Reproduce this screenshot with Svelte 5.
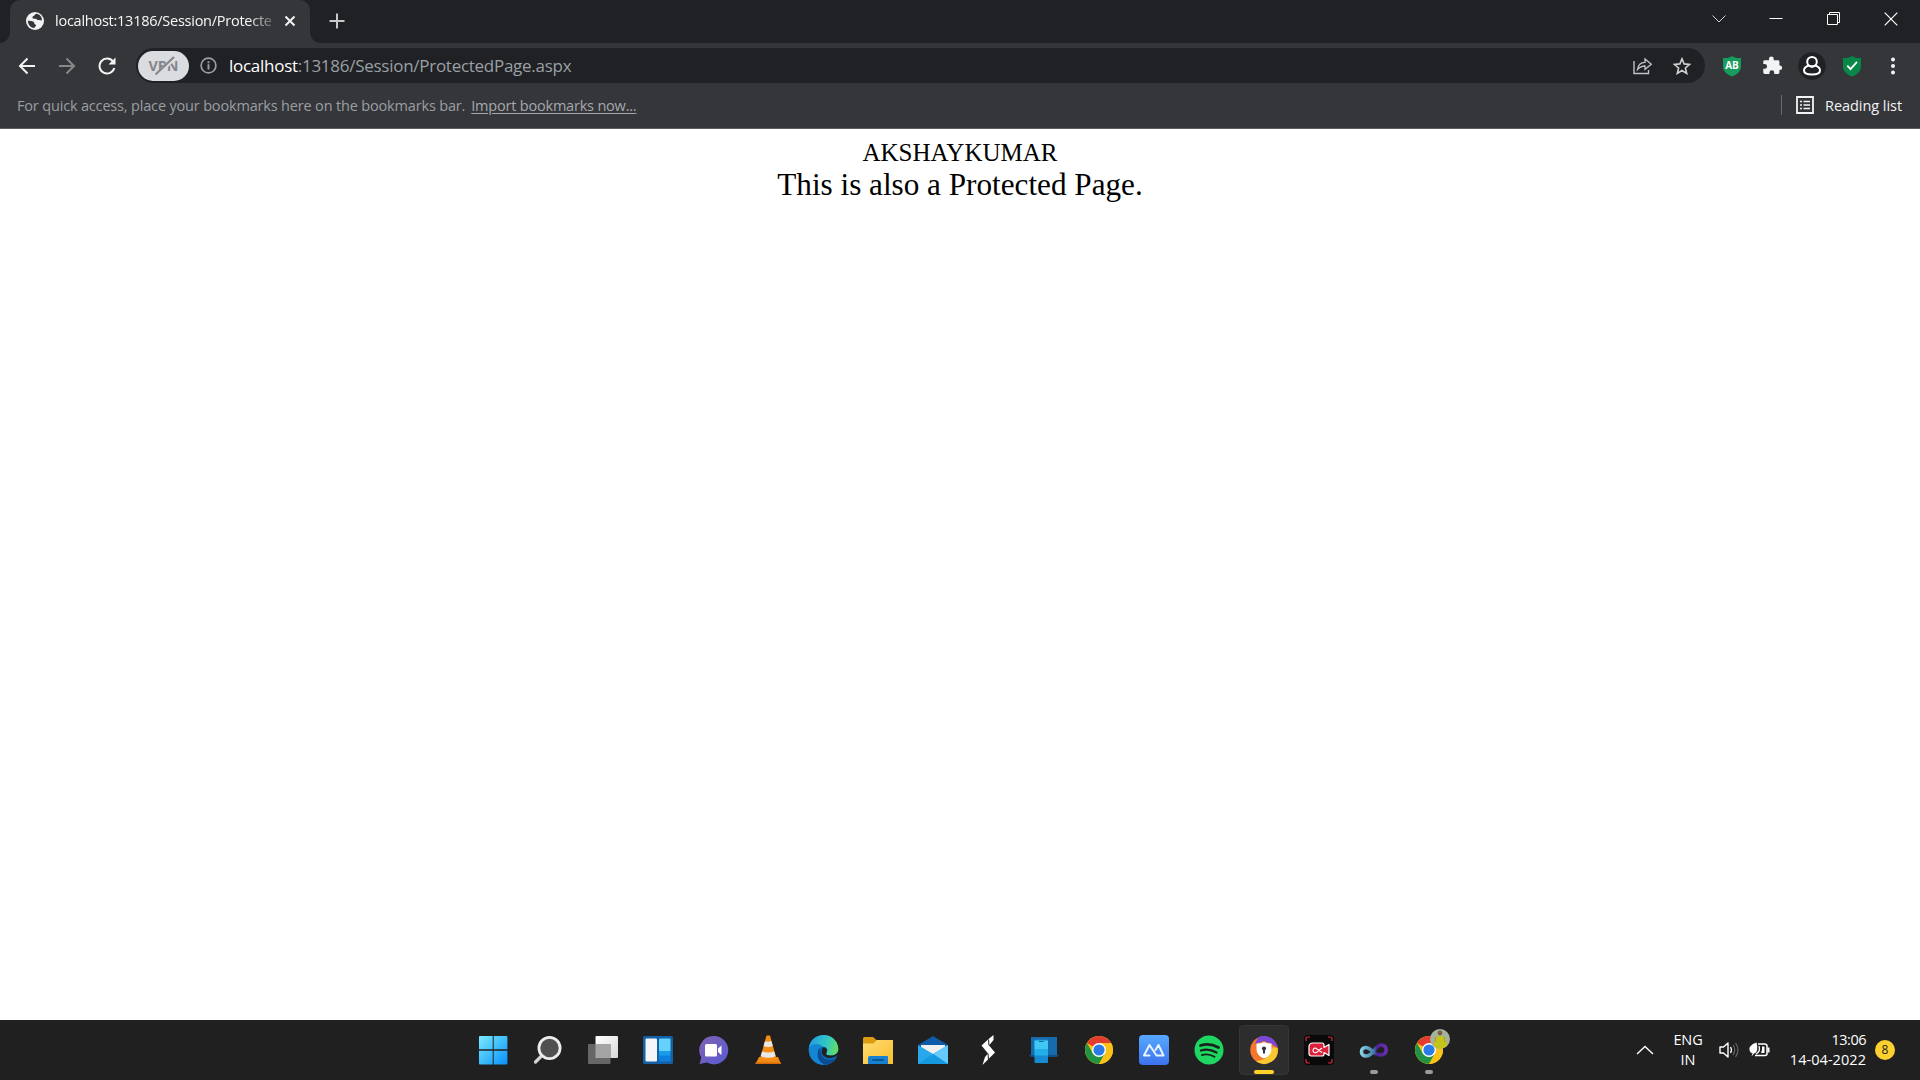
<script>
  const apps = ['start', 'search', 'tasks', 'widgets', 'chat', 'vlc', 'edge', 'files', 'mail', 'slash', 'phone', 'chrome', 'market', 'spotify', 'secure', 'recorder', 'studio', 'chromeUser'];
  const running = { secure: 'active', studio: 'idle', chromeUser: 'idle' };
</script>

{#snippet chromeLogo()}
  <circle cx="15" cy="15" r="14" fill="#fbc116" />
  <path d="M15 15 2.900 8A14 14 0 0 1 27.100 8H15Z" fill="#e33b2e" />
  <path d="M2.900 8A14 14 0 0 0 15 29L21 18.500 15 15 9 18.500Z" fill="#229342" />
  <path d="M15 8H27.100A14 14 0 0 1 15 29L21 18.500Z" fill="#fbc116" />
  <circle cx="15" cy="15" r="7" fill="#fff" />
  <circle cx="15" cy="15" r="5.600" fill="#2a7be8" />
{/snippet}

<div class="screen">
  <header class="titlebar">
    <div class="tab">
      <svg class="favicon" width="18" height="18" viewBox="0 0 18 18"><circle cx="9" cy="9" r="9" fill="#f1f3f4" /><path d="M10.400 1.800C8.500 2.200 9 3.500 7.600 4.100 6.200 4.600 6 5.600 7 6.400c1.200.8 2.900-.3 3.900 1 .8 1 2.600.4 5 1.100C16 4.700 13.600 2.300 10.400 1.800Z" fill="#35363a" /><path d="M1.900 8.700c1.900.2 4.100-.1 5.600 1.100 1.200 1 .4 2.200 1.700 2.600 1.200.3 1 1.500.1 2.100-.6.4-.6.900-.9 1.500C4.700 15.900 1.800 12.500 1.900 8.700Z" fill="#35363a" /></svg>
      <span class="title">localhost:13186/Session/Protecte</span>
      <svg class="close" width="12" height="12" viewBox="0 0 12 12"><path d="m1.500 1.500 9 9m0-9-9 9" stroke="#f1f3f4" stroke-width="2" /></svg>
    </div>
    <svg class="newtab" width="16" height="16" viewBox="0 0 16 16"><path d="M8 .5v15M.5 8h15" stroke="#c7c8ca" stroke-width="2" /></svg>
    <div class="window-controls">
      <svg width="14" height="14" viewBox="0 0 14 14"><path d="m.5 3.500 6.500 6.500 6.500-6.500" fill="none" stroke="#d0d1d2" /></svg>
      <svg width="14" height="14" viewBox="0 0 14 14"><path d="M.5 6.500h13" stroke="#fff" /></svg>
      <svg width="14" height="14" viewBox="0 0 14 14"><path d="M.5 2.500h10v10H.5ZM2.500 2.500v-2h10v10h-2" fill="none" stroke="#fff" /></svg>
      <svg width="14" height="14" viewBox="0 0 14 14"><path d="m.7.7 12.600 12.600M13.300.7.7 13.300" stroke="#fff" stroke-width="1.200" /></svg>
    </div>
  </header>

  <nav class="toolbar">
    <svg width="18" height="18" viewBox="0 0 18 18"><path d="M17 9H2m7.500-7.500L2 9l7.500 7.500" fill="none" stroke="#f1f3f4" stroke-width="2" /></svg>
    <svg width="18" height="18" viewBox="0 0 18 18"><path d="M1 9h15M8.500 1.500 16 9l-7.500 7.500" fill="none" stroke="#87888a" stroke-width="2" /></svg>
    <svg width="18" height="18" viewBox="0 0 18 18"><path d="M15 4.500A7.500 7.500 0 1 0 16.300 11" fill="none" stroke="#f1f3f4" stroke-width="2" /><path d="M17.500.5v7h-7Z" fill="#f1f3f4" /></svg>
    <div class="omnibox">
      <span class="vpn"><svg width="35" height="24" viewBox="-2 -2 35 24" overflow="visible"><text x=".5" y="15.300" textLength="30" lengthAdjust="spacingAndGlyphs" font-family="Open Sans, sans-serif" font-size="15" font-weight="700" fill="#85868b">VPN</text><path d="M9 19 25 3" stroke="#dadce0" stroke-width="4.500" /><path d="M7.500 18.500 26 1" stroke="#85868b" stroke-width="2.200" /></svg></span>
      <svg class="info" width="17" height="17" viewBox="0 0 17 17"><circle cx="8.500" cy="8.500" r="7.400" fill="none" stroke="#9b9da0" stroke-width="1.700" /><path d="M8.500 7.300v5.200M8.500 4.200v2" stroke="#9b9da0" stroke-width="1.900" /></svg>
      <span class="url"><b>localhost</b><i>:13186/Session/ProtectedPage.aspx</i></span>
      <svg class="share" width="20" height="18" viewBox="0 0 20 18"><path d="M1 4v12.500h14.500V13" fill="none" stroke="#bfc1c4" stroke-width="1.400" /><path d="M4.500 12.500c.6-4.600 3.300-7 7.500-7.200V2l6.300 5.200-6.300 5.100V9c-3.200 0-5.300 1.100-7.500 3.500Z" fill="none" stroke="#bfc1c4" stroke-width="1.300" /></svg>
      <svg width="18" height="18" viewBox="0 0 18 18"><path d="m9 1.800 2.100 5.100 5.500.5-4.200 3.600 1.300 5.400L9 13.500l-4.700 2.900L5.600 11 1.400 7.400l5.500-.5Z" fill="none" stroke="#d0d1d3" stroke-width="1.600" /></svg>
    </div>
    <div class="extensions">
      <svg width="28" height="28" viewBox="0 0 28 28"><path d="M14 4c2.600 1.900 5.500 2.200 9 2v8.500c0 4.700-3.800 7.900-9 10-5.200-2.100-9-5.300-9-10V6c3.500.2 6.400-.1 9-2Z" fill="#169c5b" /><text x="14" y="17" text-anchor="middle" font-family="Open Sans, sans-serif" font-size="10" font-weight="700" fill="#fff">AB</text></svg>
      <svg width="28" height="28" viewBox="0 0 28 28"><path d="M6 9h4.500V7.500a2.500 2.500 0 0 1 5 0V9H20q1.500 0 1.500 1.500v4h.5a2.400 2.400 0 0 1 0 4.800h-.5V22q0 1.500-1.500 1.500h-4V22a2.400 2.400 0 0 0-5 0v1.500H6Q4.500 23.500 4.500 22v-4H6a2.400 2.400 0 0 0 0-5H4.500v-2.500Q4.500 9 6 9Z" fill="#f1f3f4" transform="translate(1 -.3) scale(.95)" /></svg>
      <svg width="28" height="28" viewBox="0 0 28 28"><circle cx="14" cy="14" r="13.800" fill="#202124" /><circle cx="14" cy="9.700" r="4.800" fill="none" stroke="#fff" stroke-width="2" /><path d="M10.500 13.500C7.700 14.600 6 16.300 6 18.500c0 2.800 3.400 4 8 4s8-1.200 8-4c0-2.200-1.700-3.900-4.500-5-2 1.300-5 1.300-7 0Z" fill="none" stroke="#fff" stroke-width="2" /></svg>
      <svg width="28" height="28" viewBox="0 0 28 28"><path d="M14 4c2.600 1.900 5.500 2.200 9 2v8.500c0 4.700-3.800 7.900-9 10-5.200-2.100-9-5.300-9-10V6c3.500.2 6.400-.1 9-2Z" fill="#078849" /><path d="m9.300 13.700 3.200 3.400L19 9.800" fill="none" stroke="#fff" stroke-width="1.800" /></svg>
      <svg width="28" height="28" viewBox="0 0 28 28" fill="#f1f3f4"><circle cx="14" cy="7.500" r="2" /><circle cx="14" cy="14" r="2" /><circle cx="14" cy="20.500" r="2" /></svg>
    </div>
  </nav>

  <div class="bookmarks">
    <span class="hint">For quick access, place your bookmarks here on the bookmarks bar.</span>
    <span class="import">Import bookmarks now...</span>
    <div class="reading">
      <svg width="18" height="18" viewBox="0 0 18 18"><path d="M1 1h16v16H1Z" fill="none" stroke="#f1f3f4" stroke-width="1.800" /><path d="M4 5.500h2m1.500 0H14M4 9h2m1.500 0H14m-10 3.500h2m1.500 0H14" stroke="#f1f3f4" stroke-width="1.700" /></svg>
      <span>Reading list</span>
    </div>
  </div>

  <main>
    <div class="name">AKSHAYKUMAR</div>
    <div class="message">This is also a Protected Page.</div>
  </main>

  <footer class="taskbar">
    <div class="apps">
      {#each apps as app}
        <div class={['app', running[app]]}>
          <svg width="30" height="30" viewBox="0 0 30 30" overflow="visible">
            {#if app === 'start'}
              <defs><linearGradient id="win" x1="1" y1="1" x2="29" y2="29" gradientUnits="userSpaceOnUse"><stop stop-color="#7beaff" /><stop offset="1" stop-color="#0a94fb" /></linearGradient></defs>
              <path d="M2 1h13v13.500H1V2q0-1 1-1Zm14 0h13q1 0 1 1v12.500H16ZM1 16h14v14H2q-1 0-1-1Zm15 0h14v13q0 1-1 1H16Z" fill="url(#win)" transform="translate(0 0) scale(.98)" />
            {:else if app === 'search'}
              <path d="m9 20.500-6.500 6.500" stroke="#d4d4d4" stroke-width="3.200" stroke-linecap="round" /><circle cx="16.500" cy="13" r="10.600" fill="#505050" stroke="#ececec" stroke-width="2.800" />
            {:else if app === 'tasks'}
              <defs><linearGradient id="tv" x2="1" y2="1"><stop stop-color="#fff" /><stop offset="1" stop-color="#d8d8d8" /></linearGradient></defs>
              <rect x="7.500" y="1" width="22.500" height="22" rx="1" fill="url(#tv)" /><rect y="9" width="22.500" height="20" rx="1" fill="#666" /><path d="M7.500 9h15v14h-15Z" fill="#a4a4a4" />
            {:else if app === 'widgets'}
              <rect y="1" width="30" height="28" rx="1.500" fill="#1360a6" /><rect x="2.500" y="3.500" width="11.500" height="23" rx="1" fill="#f3f5f7" /><rect x="16" y="3.500" width="11.500" height="13" rx="1" fill="#65d2fb" /><path d="M16 16h11.500v5H16Z" fill="#199be8" /><path d="M16 20.500h11.500v6H16Z" fill="#0c80dc" />
            {:else if app === 'chat'}
              <defs><linearGradient id="chat" x2="1" y2="1"><stop stop-color="#8062b4" /><stop offset="1" stop-color="#595bd2" /></linearGradient></defs>
              <path d="M15.500 1A14.200 14.200 0 1 1 9 27.500L1.500 29 3.300 22.500A14.200 14.200 0 0 1 15.500 1Z" fill="url(#chat)" /><rect x="7" y="9" width="12" height="12.500" rx="1.500" fill="#fff" /><path d="M20 13.500 23.500 10.500v9.500L20 17Z" fill="#fff" />
            {:else if app === 'vlc'}
              <path d="M6 22h19l3 7H2.500Z" fill="#f18a12" /><path d="M13.500.5h3.500L23.500 24q-8 3.500-16.500 0Z" fill="#f48e17" /><path d="m12 6-1.500 5q4.500 2 9.300 0L18.300 6q-3 1.400-6.300 0Zm-3 10.500-1.400 4.700q7.500 3 15 0l-1.400-4.700q-6 2-12.200 0Z" fill="#e8e8e8" /><path d="M2.500 27.500h25.500V29H2.500Z" fill="#d96b08" />
            {:else if app === 'edge'}
              <defs><linearGradient id="edgeTop" x1="2" y1="8" x2="30" y2="16" gradientUnits="userSpaceOnUse"><stop stop-color="#249fdc" /><stop offset=".55" stop-color="#32c8c4" /><stop offset="1" stop-color="#69df58" /></linearGradient></defs>
              <circle cx="15.500" cy="15" r="14.800" fill="#0c67b7" /><path d="M.8 13C2 5 8 0 15.500 0 24 0 30 6 30.300 13.500c.1 4.600-3.300 7-7.300 7-4.200 0-5.500-1.500-4.400-3 2-3-.1-6-4.200-6C8.500 8.500 3.500 9.500.8 13Z" fill="url(#edgeTop)" /><path d="M.8 13c3-4.500 9.500-5.500 14.200-1.300-5 .8-6.300 6.300-3.300 10.200 3.100 4 9.700 4.700 16.300 1.300C25.500 27.500 20.500 30 15.500 29.800 6.500 29.500.2 22.500.8 13Z" fill="#1487d4" /><path d="M11.500 13c-4 7-1.500 14 5.500 16.700 4.500-.2 8.500-2.700 11-6.500-8 3.500-14.500.8-15-5Z" fill="#0b4b92" /><path d="M18.500 17.500c-1.100 1.700.3 3 4.500 3 3.500 0 6.500-1.500 7.200-4.500v3.200c-3.500 4.200-10 5-14 2-3.200-2.500-3-6.500-.8-9 3.200.8 4.500 3 3.100 5.300Z" fill="#202020" />
            {:else if app === 'files'}
              <defs><linearGradient id="folder" x2="1" y2="1"><stop stop-color="#ffdd70" /><stop offset="1" stop-color="#f8bd30" /></linearGradient></defs>
              <path d="M1.500 2H10l3.500 3H30v10H0V3.500Q0 2 1.500 2Z" fill="#dc9d13" /><path d="M0 8.500h10.500L14 5h15q1 0 1 1v23H0Z" fill="url(#folder)" /><path d="M7 21h17q1 0 1 1v7H5v-6q0-2 2-2Z" fill="#1681d3" /><rect x="9" y="24" width="12" height="2" rx="1" fill="#0b5692" />
            {:else if app === 'mail'}
              <path d="M0 10 15 1l15 9-15 12Z" fill="#105ba7" /><path d="M3 10h24v11H3Z" fill="#f0f0ee" /><path d="m0 10 15 9L30 10v19H0Z" fill="#28a8ea" /><path d="m15 19 15-9v19Z" fill="#65cafb" /><path d="m0 29 15-10 15 10Z" fill="#159ae2" />
            {:else if app === 'slash'}
              <path d="M20.500 0v5L16 10.500l6 7L14.500 25 9.500 30l2.500-8 3-3.500-6.500-8L15 4.500Z" fill="#fff" /><path d="m15.500 4.500.5 6m-1 8 .5 6.500" stroke="#202020" />
            {:else if app === 'phone'}
              <path d="M3 2h26v18H3Z" fill="#176bad" /><path d="M1 20h30l-2 2H3Z" fill="#0e4f85" /><rect x="6.500" y="4.500" width="13.500" height="23.500" rx="1" fill="#168bd2" /><path d="M6.500 5.500h13.500v9H6.500Z" fill="#3ec9f5" /><path d="M6.500 14.500h13.500v6H6.500Z" fill="#22aee6" /><path d="M11 6.500h4.500" stroke="#11639a" />
            {:else if app === 'chrome'}
              {@render chromeLogo()}
            {:else if app === 'market'}
              <defs><linearGradient id="mk" x2="0" y2="1"><stop stop-color="#56a9ff" /><stop offset="1" stop-color="#3d72ee" /></linearGradient></defs>
              <rect width="30" height="30" rx="4" fill="url(#mk)" /><path d="M10.500 20.500H5l5.500-10.500 7 10.500h7L19.500 10l-3 5" fill="none" stroke="#e8f5ff" stroke-width="2" stroke-linejoin="round" stroke-linecap="round" />
            {:else if app === 'spotify'}
              <circle cx="15" cy="15" r="14.500" fill="#1ed760" /><path d="M6.500 10.500q9-3 18 2" stroke="#17231b" stroke-width="2.800" fill="none" stroke-linecap="round" /><path d="M7 15.500q8-2.300 15.500 2" stroke="#17231b" stroke-width="2.300" fill="none" stroke-linecap="round" /><path d="M8 20q6.500-1.800 12.500 1.800" stroke="#17231b" stroke-width="1.900" fill="none" stroke-linecap="round" />
            {:else if app === 'secure'}
              <circle cx="15" cy="15" r="13.800" fill="#f4762c" /><path d="M9 2.500A13.800 13.800 0 0 1 28.700 13L23 9 15 6 6 9Z" fill="#7a48d8" /><path d="M28.700 13A13.800 13.800 0 0 1 7 26.300L16 24l8-12Z" fill="#f7c82f" /><path d="M15 7q3.500 1.800 7.500 1.600V14c0 4.600-3 7.800-7.500 9.600C10.500 21.800 7.500 18.600 7.500 14V8.600Q11.500 8.800 15 7Z" fill="#fff" /><circle cx="15" cy="13.500" r="2.100" fill="#32304b" /><path d="M14 14h2v4.500h-2Z" fill="#32304b" />
            {:else if app === 'recorder'}
              <rect width="30" height="30" rx="4" fill="#090909" /><path d="M2 6V4q0-2 2-2h2m18 0h2q2 0 2 2v2M2 24v2q0 2 2 2h2m18 0h2q2 0 2-2v-2" fill="none" stroke="#dc2740" stroke-width="1.200" /><path d="M9 8h9q2 0 2 2v2.500l5-3v11l-5-3V19q0 2-2 2H7.500Q5 21 5 18.500V12q0-4 4-4Z" fill="#dc2039" stroke="#fff" stroke-width="1.200" stroke-linejoin="round" /><path d="m18 13-5 4q-2.500 1.700-3.800-.5-.7-3.300 2.300-3.500l6.500 4.500" fill="none" stroke="#fff" stroke-width="1.200" />
            {:else if app === 'studio'}
              <defs><linearGradient id="vs" x1="1" y1="0" x2="29" y2="0" gradientUnits="userSpaceOnUse"><stop stop-color="#8fd6ea" /><stop offset=".48" stop-color="#4380a8" /><stop offset=".6" stop-color="#4c239b" /><stop offset="1" stop-color="#7030b7" /></linearGradient></defs>
              <path d="M14.500 16.500C11.500 20 9.500 21 7 21c-6 0-6-8.500 0-8.500 5 0 7.500 7.500 14.500 7.500 7.500 0 7.500-10 .5-10-3.500 0-5 3.500-7.500 6.500Z" fill="none" stroke="url(#vs)" stroke-width="3.600" />
            {:else if app === 'chromeUser'}
              {@render chromeLogo()}
              <circle cx="26" cy="4" r="10" fill="#a5b29b" /><path d="M20 11q0-9 4-10h4q4.500 1 5 10-6.500 5-13 0Z" fill="#c5c41a" /><path d="m22 2-1 5m9-5 1 5" stroke="#a99a35" stroke-width="1" /><circle cx="26" cy="-2" r="2.400" fill="#805c43" />
            {/if}
          </svg>
        </div>
      {/each}
    </div>
    <div class="tray">
      <svg class="up" width="18" height="10" viewBox="0 0 18 10"><path d="m1 9 8-7.500L17 9" fill="none" stroke="#fff" stroke-width="1.400" /></svg>
      <div class="lang"><span>ENG</span><span>IN</span></div>
      <svg class="sound" width="20" height="18" viewBox="0 0 20 18"><path d="M1 6h3.500L9 2v14l-4.500-4H1Z" fill="none" stroke="#fff" stroke-width="1.400" stroke-linejoin="round" /><path d="M11.500 6q2 3 0 6" fill="none" stroke="#fff" stroke-width="1.300" /><path d="M14 4q3.500 5 0 10m2.500-12q5 7 0 14" fill="none" stroke="#666" stroke-width="1.200" /></svg>
      <svg class="battery" width="21" height="16" viewBox="0 0 21 16"><path d="M9 2h6.500Q18 2 18 4v7.500q0 2-2 2H6" fill="none" stroke="#fff" stroke-width="1.500" /><path d="M18.500 5.500h2v5h-2ZM13 4.500h2.500V11H12q1.500-3 1-6.500Z" fill="#fff" /><path d="M7.500.5C2 2.500 0 5 .5 8c.3 2 1.500 3 3 3.300L2.500 14.500 5 11.500C8.500 11 9 6 7.500.5Z" fill="#fff" /><path d="M10 4q2 5-3 8" fill="none" stroke="#fff" stroke-width="1.300" /></svg>
      <div class="clock"><span class="time">13:06</span><span class="date">14-04-2022</span></div>
      <span class="count">8</span>
    </div>
  </footer>
</div>

<style>
  :global(body) { background: #fff; overflow: hidden; }
  .screen { width: 1920px; height: 1080px; display: flex; flex-direction: column; font-family: 'Open Sans', 'Noto Sans', sans-serif; background: #fff; }
  svg { display: block; flex: none; }
  .titlebar { height: 43px; background: #202124; display: flex; padding-left: 10px; box-sizing: border-box; }
  .tab { width: 300px; height: 43px; background: #35363a; border-radius: 10px 10px 0 0; display: flex; align-items: center; padding: 0 14px 1px 16px; box-sizing: border-box; position: relative; }
  .tab::before, .tab::after { content: ''; position: absolute; bottom: 0; width: 10px; height: 10px; }
  .tab::before { left: -10px; background: radial-gradient(circle at 0 0, #202124 9.500px, #35363a 10px); }
  .tab::after { right: -10px; background: radial-gradient(circle at 100% 0, #202124 9.500px, #35363a 10px); }
  .title { margin-left: 11px; padding-bottom: 1px; white-space: nowrap; color: #f6f7f8; font-size: 14.500px; letter-spacing: -.25px; -webkit-mask-image: linear-gradient(90deg, #000 89%, #0004); mask-image: linear-gradient(90deg, #000 89%, #0004); }
  .close { margin-left: auto; }
  .newtab { margin: 13px 0 0 19px; }
  .window-controls { display: flex; gap: 43.300px; margin: 12px 22px 0 auto; }
  .toolbar { height: 45px; background: #35363a; display: flex; align-items: center; padding-left: 18px; box-sizing: border-box; gap: 22.200px; }
  .omnibox { width: 1569px; height: 35px; margin-left: -2.600px; background: #202124; border-radius: 18px; display: flex; align-items: center; box-sizing: border-box; padding: 0 14px 0 2px; }
  .vpn { width: 51px; height: 30px; border-radius: 15px; background: #dadce0; display: flex; align-items: center; justify-content: center; }
  .info { margin-left: 11.500px; }
  .url { margin-left: 11.500px; font-size: 17px; white-space: nowrap; letter-spacing: -.27px; }
  .url b { font-weight: 400; color: #fff; }
  .url i { font-style: normal; color: #9aa0a6; }
  .share { margin-left: auto; margin-right: 20px; }
  .extensions { display: flex; gap: 12.100px; margin-left: -9px; }
  .bookmarks { height: 41px; background: #35363a; border-bottom: 1px solid #5b5c5f; box-sizing: border-box; display: flex; align-items: center; padding: 0 18px 6px 17px; font-size: 14.500px; white-space: nowrap; color: #9b9ea3; }
  .hint { letter-spacing: -.17px; }
  .import { margin-left: 6px; color: #a5a8ad; text-decoration: underline; text-underline-offset: 2px; letter-spacing: -.2px; }
  .reading { margin-left: auto; height: 20px; border-left: 1px solid #67686b; display: flex; align-items: center; padding-left: 14px; gap: 11px; color: #f1f3f4; letter-spacing: -.05px; }
  main { flex: 1; padding-top: 9px; display: flex; flex-direction: column; align-items: center; color: #000; font-family: 'Liberation Serif', serif; }
  .name { font-size: 25px; line-height: 29px; }
  .message { font-size: 31.200px; line-height: 36px; }
  .taskbar { height: 60px; background: #202020; display: flex; justify-content: space-between; padding-left: 465.500px; }
  .apps { display: flex; }
  .app { width: 55.050px; height: 60px; display: flex; align-items: center; justify-content: center; position: relative; }
  .active::before { content: ''; position: absolute; inset: 5px 2.500px; background: #2d2d2d; border: 1px solid #353535; border-radius: 4px; box-sizing: border-box; }
  .app svg { position: relative; }
  .active::after, .idle::after { content: ''; position: absolute; bottom: 6px; width: 8px; height: 4px; border-radius: 2px; background: #9b9b9b; }
  .active::after { width: 20px; background: #ffd02e; }
  .tray { display: flex; align-items: center; color: #fff; font-size: 14.500px; line-height: 20px; padding-right: 25px; }
  .tray .up { margin-right: 19px; }
  .lang, .clock { display: flex; flex-direction: column; }
  .lang { width: 30px; align-items: center; letter-spacing: -.1px; }
  .sound { margin-left: 16px; }
  .battery { margin-left: 10px; }
  .clock { width: 80px; margin-left: 16px; align-items: flex-end; white-space: nowrap; }
  .time { letter-spacing: -.5px; }
  .date { letter-spacing: .05px; }
  .count { margin-left: 9px; width: 20px; height: 20px; border-radius: 50%; background: #fcd12f; color: #222; text-align: center; font-size: 12px; }
</style>
